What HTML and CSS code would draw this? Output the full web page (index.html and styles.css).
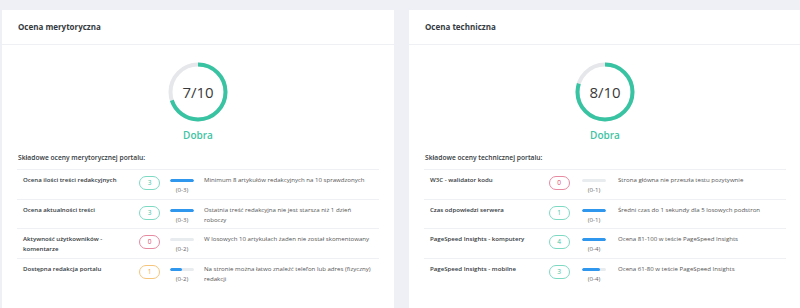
FILE: index.html
```html
<!DOCTYPE html>
<html lang="pl">
<head>
    <meta charset="UTF-8">
    <meta name="viewport" content="width=device-width, initial-scale=1.0">
    <title>Ocena portalu</title>
    <link rel="stylesheet" href="styles.css">
</head>
<body>
    <div class="cards">
        <div class="card card-merit">
            <div class="card-header">Ocena merytoryczna</div>
            <div class="card-body">
                <div class="score">
                    <div class="ring">
                        <svg viewBox="0 0 60 60" width="60" height="60">
                            <circle class="ring-bg" cx="30" cy="30" r="27.5"></circle>
                            <circle class="ring-fg" cx="30" cy="30" r="27.5" pathLength="100" stroke-dasharray="70 100"></circle>
                        </svg>
                        <span class="ring-value">7/10</span>
                    </div>
                    <div class="score-label">Dobra</div>
                </div>

                <div class="parts-title">Składowe oceny merytorycznej portalu:</div>
                <table class="parts">
                    <colgroup>
                        <col class="col-name"><col class="col-badge"><col class="col-bar"><col>
                    </colgroup>
                    <tr>
                        <td class="name">Ocena ilości treści redakcyjnych</td>
                        <td><span class="badge good">3</span></td>
                        <td><div class="bar"><div class="bar-fill" style="width: 100%"></div></div><div class="range">(0-3)</div></td>
                        <td class="desc">Minimum 8 artykułów redakcyjnych na 10 sprawdzonych</td>
                    </tr>
                    <tr>
                        <td class="name">Ocena aktualności treści</td>
                        <td><span class="badge good">3</span></td>
                        <td><div class="bar"><div class="bar-fill" style="width: 100%"></div></div><div class="range">(0-3)</div></td>
                        <td class="desc">Ostatnia treść redakcyjna nie jest starsza niż 1 dzień roboczy</td>
                    </tr>
                    <tr>
                        <td class="name">Aktywność użytkowników - komentarze</td>
                        <td><span class="badge bad">0</span></td>
                        <td><div class="bar"><div class="bar-fill" style="width: 0%"></div></div><div class="range">(0-2)</div></td>
                        <td class="desc">W losowych 10 artykułach żaden nie został skomentowany</td>
                    </tr>
                    <tr>
                        <td class="name">Dostępna redakcja portalu</td>
                        <td><span class="badge mid">1</span></td>
                        <td><div class="bar"><div class="bar-fill" style="width: 50%"></div></div><div class="range">(0-2)</div></td>
                        <td class="desc">Na stronie można łatwo znaleźć telefon lub adres (fizyczny) redakcji</td>
                    </tr>
                </table>
            </div>
        </div>

        <div class="card card-tech">
            <div class="card-header">Ocena techniczna</div>
            <div class="card-body">
                <div class="score">
                    <div class="ring">
                        <svg viewBox="0 0 60 60" width="60" height="60">
                            <circle class="ring-bg" cx="30" cy="30" r="27.5"></circle>
                            <circle class="ring-fg" cx="30" cy="30" r="27.5" pathLength="100" stroke-dasharray="80 100"></circle>
                        </svg>
                        <span class="ring-value">8/10</span>
                    </div>
                    <div class="score-label">Dobra</div>
                </div>

                <div class="parts-title">Składowe oceny technicznej portalu:</div>
                <table class="parts">
                    <colgroup>
                        <col class="col-name"><col class="col-badge"><col class="col-bar"><col>
                    </colgroup>
                    <tr>
                        <td class="name">W3C - walidator kodu</td>
                        <td><span class="badge bad">0</span></td>
                        <td><div class="bar"><div class="bar-fill" style="width: 0%"></div></div><div class="range">(0-1)</div></td>
                        <td class="desc">Strona główna nie przeszła testu pozytywnie</td>
                    </tr>
                    <tr>
                        <td class="name">Czas odpowiedzi serwera</td>
                        <td><span class="badge good">1</span></td>
                        <td><div class="bar"><div class="bar-fill" style="width: 100%"></div></div><div class="range">(0-1)</div></td>
                        <td class="desc">Średni czas do 1 sekundy dla 5 losowych podstron</td>
                    </tr>
                    <tr>
                        <td class="name">PageSpeed Insights - komputery</td>
                        <td><span class="badge good">4</span></td>
                        <td><div class="bar"><div class="bar-fill" style="width: 100%"></div></div><div class="range">(0-4)</div></td>
                        <td class="desc">Ocena 81-100 w teście PageSpeed Insights</td>
                    </tr>
                    <tr>
                        <td class="name">PageSpeed Insights - mobilne</td>
                        <td><span class="badge good">3</span></td>
                        <td><div class="bar"><div class="bar-fill" style="width: 75%"></div></div><div class="range">(0-4)</div></td>
                        <td class="desc">Ocena 61-80 w teście PageSpeed Insights</td>
                    </tr>
                </table>
            </div>
        </div>
    </div>
</body>
</html>
```

FILE: styles.css
```css
body {
    font-family: 'Open Sans', sans-serif;
    background-color: #eff0f6;
    color: #343a40;
    margin: 0;
    padding: 0;
    overflow: hidden;
}
.cards {
    display: flex;
    gap: 15px;
    padding: 10px 0 0 2px;
}
.card {
    flex: 0 0 392px;
    background-color: #ffffff;
    height: 320px;
}
.card-header {
    height: 34px;
    line-height: 34px;
    padding: 0 16px;
    font-size: 8px;
    font-weight: 700;
    color: #343a40;
    border-bottom: 1px solid #eef0f3;
}
.card-body {
    padding: 17px 15px 0;
}
.score {
    display: flex;
    flex-direction: column;
    align-items: center;
}
.ring {
    position: relative;
    width: 60px;
    height: 60px;
}
.ring svg {
    display: block;
    transform: rotate(-90deg);
}
.ring circle {
    fill: none;
    stroke-width: 4;
}
.ring-bg {
    stroke: #e6e7ea;
}
.ring-fg {
    stroke: #38c4a2;
}
.ring-value {
    position: absolute;
    inset: 0;
    display: flex;
    align-items: center;
    justify-content: center;
    font-size: 15px;
    color: #3a3a3a;
}
.score-label {
    margin-top: 6px;
    font-size: 10px;
    font-weight: 600;
    color: #3fc3a3;
}
.parts-title {
    margin-top: 11px;
    padding-left: 1px;
    font-size: 6.7px;
    font-weight: 600;
    line-height: 10px;
    color: #343a40;
}
.parts {
    width: 100%;
    margin-top: 6px;
    border-collapse: collapse;
    table-layout: fixed;
}
.parts tr {
    border-top: 1px solid #eef0f3;
}
.parts td {
    vertical-align: top;
    padding: 5px 0 3.5px;
    font-size: 6.1px;
    line-height: 10px;
}
.card-merit .col-name { width: 116px; }
.card-merit .col-badge { width: 33px; }
.card-merit .col-bar { width: 32px; }
.card-tech .col-name { width: 118px; }
.card-tech .col-badge { width: 34px; }
.card-tech .col-bar { width: 36px; }
.parts td.name {
    padding-left: 6px;
    font-weight: 600;
    color: #343a40;
}
.parts td.desc {
    padding-left: 6px;
    padding-right: 7px;
    color: #555;
}
.badge {
    display: block;
    width: 19px;
    height: 12px;
    line-height: 12px;
    margin: 1px auto 0;
    border: 1px solid;
    border-radius: 7px;
    text-align: center;
    font-size: 6.5px;
}
.badge.good {
    color: #3fc3a3;
    border-color: #7ed9c3;
}
.badge.bad {
    color: #d9486a;
    border-color: #e58aa0;
}
.badge.mid {
    color: #f0a83c;
    border-color: #f5c57c;
}
.bar {
    width: 24px;
    height: 3px;
    margin: 4px auto 0;
    background-color: #e9ecef;
    border-radius: 2px;
    overflow: hidden;
}
.bar-fill {
    height: 100%;
    background-color: #2f97ee;
    border-radius: 2px;
}
.range {
    margin-top: 3px;
    text-align: center;
    color: #666;
}
```
